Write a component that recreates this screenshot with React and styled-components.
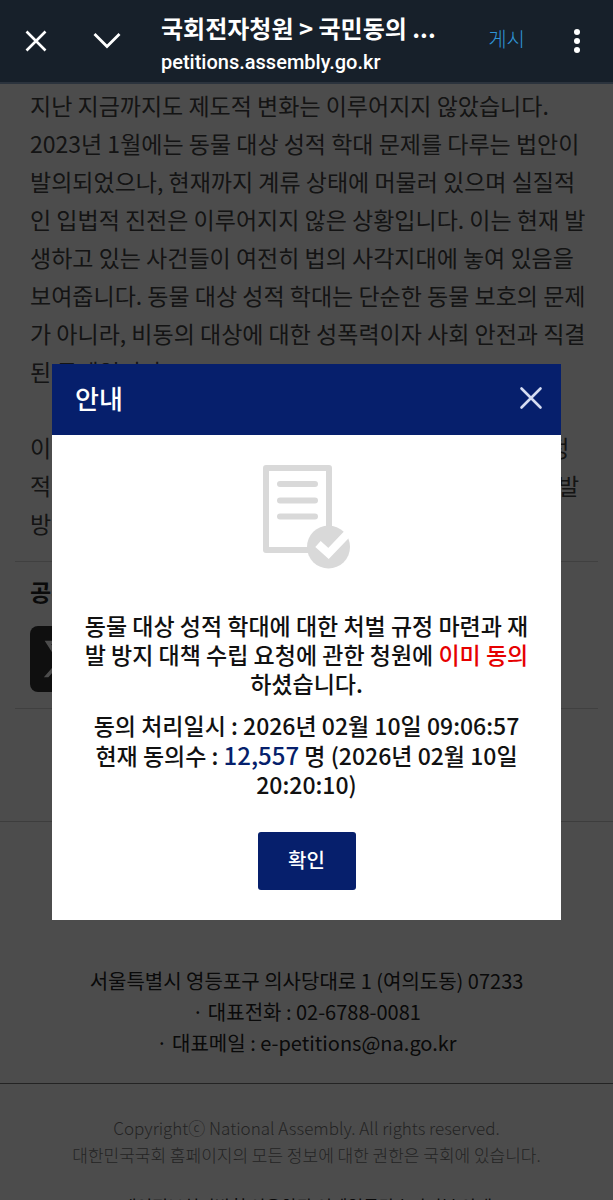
import React from 'react'
import styled, { createGlobalStyle } from 'styled-components'

const GlobalStyle = createGlobalStyle`
    *{
        box-sizing: border-box;
    }
    body{
        margin: 0;
        font-family: 'Noto Sans CJK KR', 'Noto Sans', sans-serif;
    }
    p, h1, h2{
        margin: 0;
    }
    button{
        padding: 0;
        border: none;
        background: none;
        font-family: inherit;
        cursor: pointer;
    }
`

function App() {
    return (
        <Screen>
            <GlobalStyle />
            <TopBar>
                <IconButton aria-label="닫기">
                    <svg width="24" height="24" viewBox="0 0 24 24" fill="none" stroke="#fff" strokeWidth="2.6">
                        <path d="M2.5 2.5L21.5 21.5M21.5 2.5L2.5 21.5" />
                    </svg>
                </IconButton>
                <MinimizeButton aria-label="최소화">
                    <svg width="28" height="24" viewBox="0 0 28 24" fill="none" stroke="#fff" strokeWidth="2.8">
                        <path d="M1.5 5L14 17.5L26.5 5" />
                    </svg>
                </MinimizeButton>
                <PageInfo>
                    <PageTitle>국회전자청원 &gt; 국민동의 ...</PageTitle>
                    <PageUrl>petitions.assembly.go.kr</PageUrl>
                </PageInfo>
                <PostButton>게시</PostButton>
                <IconButton aria-label="더보기">
                    <svg width="24" height="24" viewBox="0 0 24 24" fill="#fff">
                        <circle cx="12" cy="3" r="3" />
                        <circle cx="12" cy="12" r="3" />
                        <circle cx="12" cy="21" r="3" />
                    </svg>
                </IconButton>
            </TopBar>
            <Viewport>
                <Article>
                    <ArticleText>
                        지난 지금까지도 제도적 변화는 이루어지지 않았습니다.<br />
                        2023년 1월에는 동물 대상 성적 학대 문제를 다루는 법안이<br />
                        발의되었으나, 현재까지 계류 상태에 머물러 있으며 실질적<br />
                        인 입법적 진전은 이루어지지 않은 상황입니다. 이는 현재 발<br />
                        생하고 있는 사건들이 여전히 법의 사각지대에 놓여 있음을<br />
                        보여줍니다. 동물 대상 성적 학대는 단순한 동물 보호의 문제<br />
                        가 아니라, 비동의 대상에 대한 성폭력이자 사회 안전과 직결<br />
                        된 문제입니다.
                    </ArticleText>
                    <ArticleText>
                        이에, 동물 대상 성적 학대에 대한 처벌 규정의 마련과 행정<br />
                        적 대책을 통해 동일한 사건이 더는 되풀이되지 않도록 재발<br />
                        방지 대책을 수립해 주시기 바랍니다.
                    </ArticleText>
                </Article>
                <Share>
                    <ShareTitle>공유</ShareTitle>
                    <ShareButton aria-label="X">
                        <svg width="40" height="40" viewBox="0 0 24 24" fill="#fff">
                            <path d="M1 1h7.2l5.2 7L19.6 1h2.7l-7.7 8.7L23 23h-7.2l-5.7-7.9L3.2 23H.5l8.4-9.6zM4.9 3l12 18h2.2L7.2 3z" />
                        </svg>
                    </ShareButton>
                </Share>
                <Footer>
                    <Address>
                        서울특별시 영등포구 의사당대로 1 (여의도동) 07233<br />
                        · 대표전화 : 02-6788-0081<br />
                        · 대표메일 : e-petitions@na.go.kr
                    </Address>
                    <Copyright>
                        <p>Copyrightⓒ National Assembly. All rights reserved.</p>
                        <p>대한민국국회 홈페이지의 모든 정보에 대한 권한은 국회에 있습니다.</p>
                    </Copyright>
                    <Policy>개인정보처리방침 이용약관 이메일무단수집거부 안내</Policy>
                </Footer>
                <Dim>
                    <Modal role="dialog" aria-labelledby="notice-title">
                        <ModalHeader>
                            <ModalTitle id="notice-title">안내</ModalTitle>
                            <IconButton aria-label="닫기">
                                <svg width="24" height="24" viewBox="0 0 24 24" fill="none" stroke="#d5dcf2" strokeWidth="2.6" strokeLinecap="round">
                                    <path d="M2.5 2.5L21.5 21.5M21.5 2.5L2.5 21.5" />
                                </svg>
                            </IconButton>
                        </ModalHeader>
                        <ModalBody>
                            <svg width="88" height="104" viewBox="0 0 88 104" fill="none" stroke="#d9d9d9" strokeWidth="6">
                                <rect x="3" y="3" width="63" height="82" strokeLinejoin="round" />
                                <path d="M17 19H52M17 35.5H52M17 51.5H52" strokeLinecap="round" />
                                <circle cx="65.500" cy="82" r="21.500" fill="#d9d9d9" stroke="none" />
                                <path d="M55 79L65.500 88.500L86 67" stroke="#fff" strokeWidth="8" />
                            </svg>
                            <Message>
                                <p>
                                    동물 대상 성적 학대에 대한 처벌 규정 마련과 재<br />
                                    발 방지 대책 수립 요청에 관한 청원에 <Warn>이미 동의</Warn><br />
                                    하셨습니다.
                                </p>
                                <p>
                                    동의 처리일시 : 2026년 02월 10일 09:06:57<br />
                                    현재 동의수 : <Count>12,557</Count> 명 (2026년 02월 10일<br />
                                    20:20:10)
                                </p>
                            </Message>
                            <ConfirmButton>확인</ConfirmButton>
                        </ModalBody>
                    </Modal>
                </Dim>
            </Viewport>
        </Screen>
    )
}

export default App

const Screen = styled.div`
    display: flex;
    flex-direction: column;
    height: 100vh;
`
const TopBar = styled.header`
    display: flex;
    align-items: center;
    flex: none;
    height: 84px;
    padding: 0 24px;
    background: #17202a;
    border-bottom: 2px solid #2b333d;
    color: #fff;
`
const IconButton = styled.button`
    display: flex;
`
const MinimizeButton = styled(IconButton)`
    margin: 0 40px 0 45px;
`
const PageInfo = styled.div`
    flex: 1;
    min-width: 0;
    padding-top: 7px;
    white-space: nowrap;
`
const PageTitle = styled.h1`
    font-size: 24px;
    line-height: 35px;
    font-weight: 700;
`
const PageUrl = styled.p`
    font-family: Roboto, sans-serif;
    font-size: 20px;
    line-height: 35px;
    font-weight: 500;
`
const PostButton = styled.button`
    margin-right: 40px;
    padding-bottom: 5px;
    font-size: 20px;
    font-weight: 300;
    color: #2f94d6;
`
const Viewport = styled.div`
    position: relative;
    flex: 1;
    overflow: hidden;
    background: #fff;
`
const Article = styled.article`
    display: flex;
    flex-direction: column;
    gap: 38px;
    margin: 0 15px;
    padding: 2px 15px 19px;
    border-bottom: 1px solid #d5d5d5;
`
const ArticleText = styled.p`
    font-size: 23px;
    line-height: 38px;
    color: #444;
    white-space: nowrap;
`
const Share = styled.section`
    margin: 0 15px;
    padding: 10px 15px 16px;
    border-bottom: 1px solid #d5d5d5;
`
const ShareTitle = styled.h2`
    margin-bottom: 16px;
    font-size: 23px;
    line-height: 38px;
    font-weight: 700;
    color: #222;
`
const ShareButton = styled.button`
    display: flex;
    align-items: center;
    justify-content: center;
    width: 66px;
    height: 66px;
    border-radius: 8px;
    background: #333;
`
const Footer = styled.footer`
    margin-top: 112px;
    border-top: 1px solid #ccc;
    text-align: center;
`
const Address = styled.p`
    padding: 143px 0 25px;
    border-bottom: 1px solid #777;
    font-size: 20px;
    line-height: 31px;
    color: #222;
`
const Copyright = styled.div`
    padding: 30px 0 24px;
    font-size: 17px;
    line-height: 27px;
    font-weight: 300;
    color: #777;
`
const Policy = styled.p`
    font-size: 17px;
    line-height: 27px;
    color: #222;
`
const Dim = styled.div`
    position: absolute;
    inset: 0;
    display: flex;
    align-items: center;
    justify-content: center;
    background: rgba(0, 0, 0, 0.7);
`
const Modal = styled.section`
    width: 83%;
    background: #fff;
`
const ModalHeader = styled.div`
    display: flex;
    align-items: center;
    justify-content: space-between;
    height: 71px;
    padding: 0 18px 4px 23px;
    background: #061f6c;
`
const ModalTitle = styled.h2`
    font-size: 26px;
    line-height: 38px;
    font-weight: 500;
    color: #fff;
`
const ModalBody = styled.div`
    display: flex;
    flex-direction: column;
    align-items: center;
    padding: 30px 0;
`
const Message = styled.div`
    display: flex;
    flex-direction: column;
    gap: 13px;
    margin: 42px 0 33px;
    font-size: 23px;
    line-height: 29px;
    font-weight: 500;
    text-align: center;
    color: #111;
`
const Warn = styled.span`
    color: #e60000;
`
const Count = styled.span`
    font-size: 24px;
    color: #061f6c;
`
const ConfirmButton = styled.button`
    width: 98px;
    height: 58px;
    padding-bottom: 4px;
    border-radius: 3px;
    background: #061f6c;
    font-size: 20px;
    font-weight: 500;
    color: #fff;
`
